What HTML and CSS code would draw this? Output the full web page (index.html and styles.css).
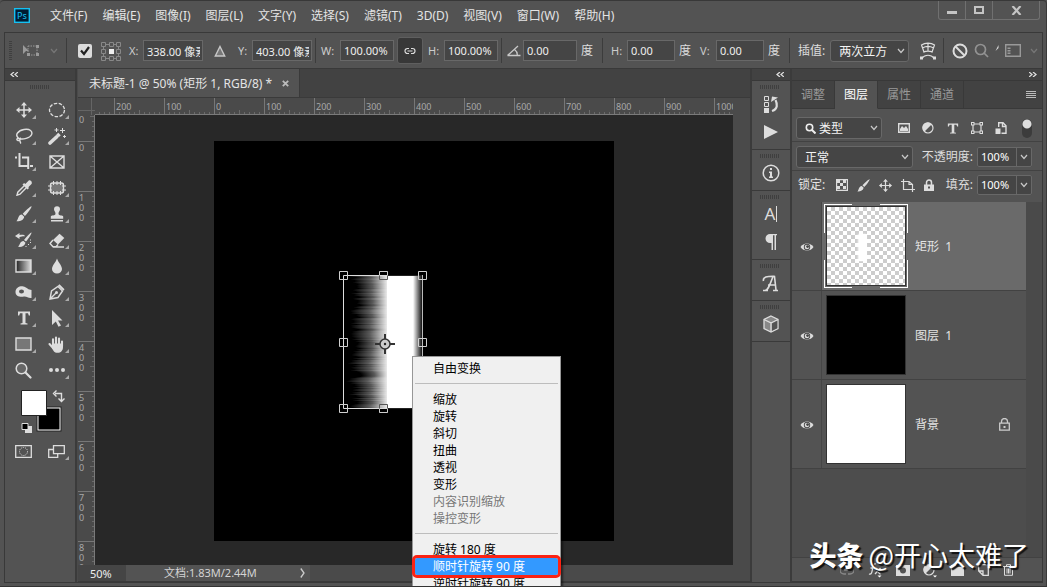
FILE: index.html
```html
<!DOCTYPE html>
<html lang="zh-CN">
<head>
<meta charset="utf-8">
<title>未标题-1</title>
<link rel="stylesheet" href="styles.css">
</head>
<body>
<svg class="defs" aria-hidden="true">
  <symbol id="chev" viewBox="0 0 8 6"><path d="M1 1l3 3.5L7 1" fill="none" stroke="currentColor" stroke-width="1.2"/></symbol>
  <symbol id="eye" viewBox="0 0 14 10"><path d="M.5 5C3 .2 11 .2 13.500 5 11 9.800 3 9.800.5 5z" fill="#ddd"/><circle cx="7" cy="5" r="3.200" fill="#4a4a4a"/><circle cx="7" cy="5" r="2.300" fill="#ddd"/><circle cx="7.600" cy="4.600" r="1.400" fill="#444"/></symbol>
  <symbol id="move" viewBox="0 0 16 16"><path d="M8 1v14M1 8h14" stroke="#ddd" stroke-width="1.500"/><path d="M8 0l3 3.500H5zM8 16l3-3.500H5zM0 8l3.500-3v6zM16 8l-3.500-3v6z" fill="#ddd"/></symbol>
  <symbol id="brush" viewBox="0 0 16 16"><path d="M15.500.3c.6.6-4 7.200-6.600 9.600L6.700 7.800C9.200 5 14.900-.3 15.500.3zM5.900 8.500l2.300 2.300C7.600 14.500 3.600 15.600.4 15.300 2.500 13.600 2 8.600 5.900 8.500z" fill="#ddd"/></symbol>
  <symbol id="tee" viewBox="0 0 14 14"><path d="M1 .5h12V4.500h-1.200L11 2.300H8.500V12l2 .5v1h-7v-1l2-.5V2.300H3L2.200 4.500H1z" fill="#ddd"/></symbol>
</svg>
<div class="app">
  <header class="menubar">
    <svg class="logo" viewBox="0 0 16 15" role="img" aria-label="Photoshop"><rect x=".7" y=".7" width="14.600" height="13.600" fill="#001d33" stroke="#16c1f3" stroke-width="1.400"/><text x="3" y="11" class="logo-text">Ps</text></svg>
    <nav class="menus">
      <button>文件(F)</button><button>编辑(E)</button><button>图像(I)</button><button>图层(L)</button><button>文字(Y)</button><button>选择(S)</button><button>滤镜(T)</button><button>3D(D)</button><button>视图(V)</button><button>窗口(W)</button><button>帮助(H)</button>
    </nav>
    <div class="winctl">
      <button aria-label="最小化"><svg width="10" height="10"><path d="M0 6h10v3H0z" fill="#c4c4c4"/></svg></button>
      <button aria-label="最大化"><svg width="10" height="8"><path d="M1 1h8v6H1z" fill="none" stroke="#c4c4c4" stroke-width="2"/></svg></button>
      <button class="wide" aria-label="关闭"><svg width="11" height="9"><path d="M1.500 0l8 9M9.500 0l-8 9" stroke="#c4c4c4" stroke-width="2.200"/></svg></button>
    </div>
  </header>

  <section class="options">
    <div class="og og-tool">
      <span class="vgrip"></span>
      <svg width="18" height="13"><path d="M1 1l6 6H4l-3 3z" fill="#999"/><path d="M6 2h9v9H6z" fill="none" stroke="#999" stroke-dasharray="1.500 1"/><path d="M14 1h3v3h-3zM14 9h3v3h-3zM5 9h3v3H5z" fill="#999"/></svg>
      <svg class="dim" width="8" height="6"><use href="#chev"/></svg>
    </div>
    <div class="og og-pos">
      <label class="check"><input type="checkbox" checked aria-label="切换参考点"><svg viewBox="0 0 14 14"><path d="M3 6.500L6 10l5-7" fill="none" stroke="#222" stroke-width="2.200"/></svg></label>
      <svg width="20" height="20"><g fill="none" stroke="#888"><path d="M.5 1.500h4v4h-4zM8.500 1.500h4v4h-4zM15.500 1.500h4v4h-4zM.5 8.500h4v4h-4zM15.500 8.500h4v4h-4zM.5 15.500h4v4h-4zM8.500 15.500h4v4h-4zM15.500 15.500h4v4h-4zM4.500 3.500h4M12.500 3.500h3M4.500 17.500h4M12.500 17.500h3M2.500 5.500v3M2.500 12.500v3M17.500 5.500v3M17.500 12.500v3"/></g><path d="M8 8h5v5H8z" fill="#eee"/></svg>
      <label class="fld"><span>X:</span><input class="w60" value="338.00 像素"></label>
      <svg class="tri" width="12" height="12"><path d="M6 1.500l4.700 9.500H1.300z" fill="#777" stroke="#c8c8c8" stroke-width="1.400"/></svg>
      <label class="fld"><span>Y:</span><input class="w60" value="403.00 像素"></label>
    </div>
    <div class="og og-size">
      <label class="fld"><span class="w19">W:</span><input class="w54" value="100.00%"></label>
      <button class="link" aria-label="保持长宽比"><svg width="12" height="8"><path d="M5 1.500H3.500a2.500 2.500 0 0 0 0 5H5M7 1.500h1.500a2.500 2.500 0 0 1 0 5H7M3.500 4h5" fill="none" stroke="#ddd" stroke-width="1.200"/></svg></button>
      <label class="fld"><span class="w16">H:</span><input class="w54" value="100.00%"></label>
    </div>
    <div class="og og-rot">
      <label class="fld"><svg width="16" height="12"><path d="M.5 10.500h13M.5 10.500L11 1M7.500 4.500c2 1.500 3 4 2.700 6" fill="none" stroke="#c8c8c8" stroke-width="1.300"/></svg><input class="w54" aria-label="旋转" value="0.00"></label>
      <span class="deg">度</span>
    </div>
    <div class="og og-skew">
      <label class="fld"><span class="w16">H:</span><input class="w48" value="0.00"></label><span class="deg">度</span>
      <label class="fld v"><span class="w16">V:</span><input class="w48" value="0.00"></label><span class="deg">度</span>
    </div>
    <div class="og og-interp">
      <label for="interp">插值:</label>
      <div class="sel"><select id="interp"><option>两次立方</option></select><svg width="8" height="6"><use href="#chev"/></svg></div>
      <button class="ib warp" aria-label="变形"><svg width="16" height="18"><path d="M1.500 3C5 .5 11 .5 14.500 3L12 10c-2-1.200-6-1.200-8 0zM8 1v8.500M2.500 6c3.500-2 7.500-2 11 0M2 16c3-3.700 9-3.700 12 0" fill="none" stroke="#ddd" stroke-width="1.200"/><path d="M0 14.500h3v3H0zM13 14.500h3v3h-3z" fill="#ddd"/></svg></button>
    </div>
    <div class="og og-end">
      <button class="ib" aria-label="取消变换"><svg width="16" height="16"><circle cx="8" cy="8" r="6.500" fill="none" stroke="#ddd" stroke-width="2"/><path d="M3.500 3.500l9 9" stroke="#ddd" stroke-width="2"/></svg></button>
      <button class="ib" aria-label="搜索"><svg width="15" height="15"><circle cx="6.500" cy="6.500" r="5" fill="none" stroke="#929292" stroke-width="1.700"/><path d="M10 10l4 4" stroke="#929292" stroke-width="1.700"/></svg></button>
      <svg class="slash" width="4" height="8"><path d="M3.500 0v3L.5 6z" fill="#ddd"/></svg>
      <button class="ib" aria-label="工作区"><svg width="16" height="13"><path d="M.7.7h14.600v11.600H.7z" fill="none" stroke="#999" stroke-width="1.400"/><path d="M2.500 3.500h3v1.500h-3zM2.500 6h3v1.500h-3zM2.500 8.500h3V10h-3z" fill="#999"/></svg></button>
      <svg class="dim" width="8" height="6"><use href="#chev"/></svg>
    </div>
  </section>

  <main class="work">
    <aside class="tools">
      <div class="cap"><svg width="8" height="5"><path d="M4 0L1 2.500 4 5M8 0L5 2.500 8 5" fill="none" stroke="#ddd" stroke-width="1.300"/></svg></div>
      <span class="grip"></span>
      <div class="toolgrid">
        <button class="t" aria-label="移动"><svg width="16" height="16"><use href="#move"/></svg></button>
        <button class="t" aria-label="椭圆选框"><svg width="18" height="16"><ellipse cx="9" cy="8" rx="7.500" ry="6.700" fill="none" stroke="#ddd" stroke-width="1.300" stroke-dasharray="3.500 1.500"/></svg></button>
        <button class="t" aria-label="套索"><svg width="18" height="16"><path d="M3.500 10C-.5 7 3 2.500 9 1.500s9 2 7.500 5.200S8 12 4 10.500c-2-.7-3 1.500-1 2s3-2 2-2.500M4.500 12c1 1.500.5 2.500 1.500 3.500" fill="none" stroke="#ddd" stroke-width="1.400"/></svg></button>
        <button class="t" aria-label="魔棒"><svg width="18" height="17"><path d="M2 15l6.500-6" stroke="#ddd" stroke-width="3.600" stroke-linecap="round"/><path d="M9.500 8l2-2" stroke="#ddd" stroke-width="3.600"/><path d="M8.500 0v4M6.500 2h4M14.500 0v5M12 2.500h5M16.500 7v3M15 8.500h3" stroke="#ddd"/></svg></button>
        <button class="t" aria-label="裁剪"><svg width="18" height="18"><path d="M0 4.500h2M4.500 0v13h9M7 4.500h6.200V16M15 13h3" fill="none" stroke="#ddd" stroke-width="2"/></svg></button>
        <button class="t plain" aria-label="图框"><svg width="16" height="14"><path d="M1 1h14v12H1zM1 1l14 12M15 1L1 13" fill="none" stroke="#ddd" stroke-width="1.400"/></svg></button>
        <button class="t" aria-label="吸管"><svg width="16" height="16"><path d="M9 5l2 2-7 7.200-3 1 .8-3z" fill="none" stroke="#ddd" stroke-width="1.400"/><path d="M6.500 4.500l5 5 1.500-1.500-.7-.8L15.500 4c1.300-1.800-1.200-4.600-3-3.300L9.300 4l-1.200-1z" fill="#ddd"/></svg></button>
        <button class="t" aria-label="修补"><svg width="18" height="16"><rect x="2.500" y="3" width="13" height="10" rx="2" fill="#777" stroke="#ddd" stroke-width="1.400"/><path d="M5.500 1v4M9 1v4M12.500 1v4M5.500 11v4M9 11v4M12.500 11v4M0 6h4M0 10h4M14 6h4M14 10h4" stroke="#ddd"/></svg></button>
        <button class="t" aria-label="画笔"><svg width="16" height="16"><use href="#brush"/></svg></button>
        <button class="t" aria-label="仿制图章"><svg width="14" height="16"><path d="M1 14.700h12" stroke="#ddd" stroke-width="1.400"/><path d="M.8 12.800V10.500C1 9 5.300 10 5.500 8 5.700 6 4 5 4 3.300a3 3 0 0 1 6 0C10 5 8.300 6 8.500 8c.2 2 4.500 1 4.700 2.500v2.300z" fill="#ddd"/></svg></button>
        <button class="t" aria-label="历史记录画笔"><svg width="18" height="16"><path d="M0 4L4.500 1v2c3-.5 5-.3 5.500 1.300C8 4 7 4.500 4.500 5v2z" fill="#ddd"/><path d="M16.500.5c.5.500-3 6.500-5.500 9L9 8c2-3 7-8 7.500-7.500zM8.500 9l2 1.800c-1 3.700-4.500 4.500-7.500 4C5 13 5 9 8.500 9z" fill="#ddd"/><path d="M15.500 7.500v1M15.500 10v1M14 12.500h-1M11.500 14.500h-1" stroke="#ddd"/></svg></button>
        <button class="t" aria-label="橡皮擦"><svg width="16" height="15"><path d="M10.500.7L15.300 5 9 11.500 4 7z" fill="#ddd"/><path d="M4 7l-3 3.500L4 13.700h3L9 11.500M4 14h11" fill="none" stroke="#ddd" stroke-width="1.400"/></svg></button>
        <button class="t" aria-label="渐变"><svg width="17" height="14"><defs><linearGradient id="g1"><stop offset="0" stop-color="#222"/><stop offset="1" stop-color="#ddd"/></linearGradient></defs><path d="M1 1h15v12H1z" fill="url(#g1)" stroke="#ddd" stroke-width="1.400"/></svg></button>
        <button class="t" aria-label="模糊"><svg width="12" height="16"><path d="M6 .5C7 4 11 7.500 11 11A5 4.600 0 0 1 1 11C1 7.500 5 4 6 .5z" fill="#ddd"/></svg></button>
        <button class="t" aria-label="减淡"><svg width="17" height="14"><path fill-rule="evenodd" d="M.5 7C.5 3 4 1 7.500 1.200c3 .2 4 1.800 6 3L16.500 5v8C12.500 13.300 12 11 8 11.700 4 12 .5 11 .5 7zM4 6.500a2.500 2 0 1 0 5 0 2.500 2 0 1 0-5 0z" fill="#ddd"/></svg></button>
        <button class="t" aria-label="钢笔"><svg width="16" height="16"><path d="M1 15l1.500-8L9 2.500 13.500 7 9 13.500zM1 15l6-6" fill="none" stroke="#ddd" stroke-width="1.400"/><circle cx="7.500" cy="8.500" r="1.500" fill="#ddd"/><path d="M9 1.500l1.500-1.200 5 5-1.200 1.500z" fill="#ddd"/></svg></button>
        <button class="t" aria-label="文字"><svg width="14" height="14"><use href="#tee"/></svg></button>
        <button class="t" aria-label="路径选择"><svg width="12" height="17"><path d="M1 0l10.500 10.500H7l3 5-2.500 1.200-2.700-5.200L1 15z" fill="#ddd"/></svg></button>
        <button class="t" aria-label="矩形"><svg width="17" height="14"><path d="M1 1h15v12H1z" fill="#777" stroke="#ddd" stroke-width="1.400"/></svg></button>
        <button class="t" aria-label="抓手"><svg width="17" height="17"><path d="M5 8V3.200M8 7.500V1.500M11 8V2.500M14 10V5.500M1.500 8l4 4.500" stroke="#ddd" stroke-width="2.100" stroke-linecap="round"/><path d="M4 7.500h11V11c0 3.500-2 5.800-5.500 5.800S5.500 15 4 12z" fill="#ddd"/></svg></button>
        <button class="t plain" aria-label="缩放"><svg width="17" height="17"><circle cx="6.500" cy="6.500" r="5.300" fill="#666" stroke="#ddd" stroke-width="1.500"/><path d="M10.500 10.500l5 5" stroke="#ddd" stroke-width="2.200" stroke-linecap="round"/></svg></button>
        <button class="t" aria-label="更多"><svg width="16" height="4"><circle cx="2" cy="2" r="2" fill="#ddd"/><circle cx="8" cy="2" r="2" fill="#ddd"/><circle cx="14" cy="2" r="2" fill="#ddd"/></svg></button>
      </div>
      <svg class="swatches" width="44" height="44" viewBox="0 0 44 44">
        <path d="M15.500 16.500h25v25h-25z" fill="#222"/><path d="M16.500 17.500h23v23h-23z" fill="#fff"/><path d="M17.500 18.500h21v21h-21z"/>
        <path d="M.5.500h25v25H.5z" fill="#fff" stroke="#222"/>
        <path d="M34 3.500h6.500V11M35.500.500l-3 3 3 3M37.500 8.500l3 3 3-3" fill="none" stroke="#ddd" stroke-width="1.400"/>
        <path d="M4 36h7v7H4z" fill="#ddd"/><path d="M1 33.500h6v6H1z" stroke="#ddd"/>
      </svg>
      <div class="modes">
        <button class="t plain" aria-label="快速蒙版"><svg width="17" height="13"><path d="M.7.7h15.600v11.600H.7z" fill="none" stroke="#ddd" stroke-width="1.300"/><circle cx="8.500" cy="6.500" r="4" fill="none" stroke="#ddd" stroke-dasharray="1 1"/></svg></button>
        <button class="t" aria-label="屏幕模式"><svg width="17" height="13"><path d="M.7 4.500h9v7.800h-9z" fill="none" stroke="#ddd" stroke-width="1.300"/><path d="M5.500.7h10.800v8H5.500z" fill="#535353" stroke="#ddd" stroke-width="1.300"/></svg></button>
      </div>
    </aside>

    <section class="doc">
      <div class="tabs"><div class="tab"><span>未标题-1 @ 50% (矩形 1, RGB/8) *</span><button aria-label="关闭文档"><svg width="7" height="7"><path d="M.8.8l5.400 5.400M6.200.8L.8 6.200" stroke="#bbb" stroke-width="1.800"/></svg></button></div></div>
      <div class="view">
        <div class="corner"></div>
        <div class="hruler"><span>200</span><span>100</span><span>0</span><span>100</span><span>200</span><span>300</span><span>400</span><span>500</span><span>600</span><span>700</span><span>800</span><span>900</span><span>1000</span></div>
        <div class="vscroll"></div>
        <div class="vruler"><span class="part">0</span><span>0</span><span>1<br>0<br>0</span><span>2<br>0<br>0</span><span>3<br>0<br>0</span><span>4<br>0<br>0</span><span>5<br>0<br>0</span><span>6<br>0<br>0</span><span>7<br>0<br>0</span><span>8<br>0<br>0</span></div>
        <div class="stage">
          <div class="artboard">
            <svg class="xform" width="90" height="144" viewBox="-5 -5 90 144">
              <defs>
                <linearGradient id="streak"><stop offset="0" stop-color="#fff" stop-opacity="0"/><stop offset=".5" stop-color="#fff" stop-opacity=".35"/><stop offset="1" stop-color="#fff" stop-opacity=".95"/></linearGradient>
                <linearGradient id="fade"><stop offset="0" stop-color="#fff"/><stop offset="1" stop-color="#111"/></linearGradient>
              </defs>
              <g id="streaks"></g>
              <path d="M44 0h27v134H44z" fill="#fff"/><path d="M70 0h9v134h-9z" fill="url(#fade)"/>
              <path d="M44 .5H.5v133H44" fill="none" stroke="#ddd"/><path d="M44 .5h35M44 133.500h35" stroke="#222"/><path d="M79.500 0v134" stroke="#bbb"/>
              <g fill="none" stroke="#d0d0d0"><path d="M-3.500-3.500h8v8h-8zM75.500-3.500h8v8h-8zM-3.500 129.500h8v8h-8zM-3.500 63.500h8v8h-8zM75.500 63.500h8v8h-8z"/></g>
              <path d="M36.500-3.500h8v8h-8zM36.500 129.500h8v8h-8z" fill="none" stroke="#555"/>
              <path d="M36.500.5v-4h8v4M36.500 133.500v4h8v-4" fill="none" stroke="#ccc"/>
              <circle cx="42" cy="69" r="5" fill="#ccc" stroke="#333" stroke-width="1.500"/><path d="M42 59v5M42 74v5M32 69h5M47 69h5" stroke="#333" stroke-width="2"/><circle cx="42" cy="69" r="1.200" fill="#222"/>
            </svg>
          </div>
        </div>
      </div>
      <footer class="status"><span class="pct">50%</span><span class="info"><span>文档:1.83M/2.44M</span><svg width="5" height="10"><path d="M.8.5L4 5 .8 9.500" fill="none" stroke="#ccc" stroke-width="1.300"/></svg></span></footer>
    </section>

    <aside class="dock">
      <div class="cap end"><svg width="8" height="5"><path d="M4 0L1 2.500 4 5M8 0L5 2.500 8 5" fill="none" stroke="#ddd" stroke-width="1.300"/></svg></div>
      <div class="dg"><span class="grip"></span>
        <button class="db" aria-label="历史记录"><svg width="16" height="18"><path d="M1.500 1.500h4v4h-4zM1.500 7.500h4v4h-4z" fill="none" stroke="#ddd"/><path d="M1 13h5v5H1z" fill="#ddd"/><path d="M9 16c6-2 5.500-7 3.500-11" fill="none" stroke="#ddd" stroke-width="2.200"/><path d="M8 7l1-5.500 6 1z" fill="#ddd"/></svg></button>
        <button class="db" aria-label="动作"><svg width="14" height="14"><path d="M0 0l14 7-14 7z" fill="#ddd"/></svg></button></div>
      <div class="dg"><span class="grip"></span>
        <button class="db" aria-label="信息"><svg width="18" height="18"><circle cx="9" cy="9" r="7.800" fill="none" stroke="#ddd" stroke-width="1.500"/><path d="M8 4h2v2H8zM7 7.500h3v5h1V14H7v-1.500h1V9H7z" fill="#ddd"/></svg></button></div>
      <div class="dg"><span class="grip"></span>
        <button class="db" aria-label="字符"><span class="ga">A</span><i class="bar"></i></button>
        <button class="db" aria-label="段落"><svg width="12" height="16"><path d="M6 0h6v1.300h-1V16H9.500V1.300H8V16H6.500V9H5A4.500 4.500 0 0 1 5 0z" fill="#ddd"/></svg></button></div>
      <div class="dg"><span class="grip"></span><button class="db" aria-label="字形"><svg width="18" height="17"><path d="M3 15.500c3 0 5-6 8-14h1.500L14 15M1.500 6C.5 2 5 1 12.500 1.200M6 10h7.500M1 15.500h5M11 15.500h5" fill="none" stroke="#ddd" stroke-width="1.600"/></svg></button></div>
      <div class="dg"><span class="grip"></span><button class="db" aria-label="3D"><svg width="16" height="18"><path d="M8 1l7 3.500v9L8 17l-7-3.500v-9z" fill="#888" stroke="#ddd" stroke-width="1.300"/><path d="M1 4.500L8 8v9M8 8l7-3.500" fill="none" stroke="#ddd" stroke-width="1.300"/><path d="M9 8.500l5.300-2.700v7.400L9 15.800z" fill="#535353"/></svg></button></div>
    </aside>

    <aside class="panel">
      <div class="cap end"><svg width="8" height="5"><path d="M0 0l3 2.500L0 5M4 0l3 2.500L4 5" fill="none" stroke="#ddd" stroke-width="1.300"/></svg></div>
      <div class="ptabs"><button>调整</button><button class="on">图层</button><button>属性</button><button>通道</button><button class="burger" aria-label="面板菜单"><svg width="10" height="8"><path d="M0 .5h10M0 2.500h10M0 4.500h10M0 6.500h10" stroke="#bbb"/></svg></button></div>
      <div class="prow filter">
        <div class="sel kind"><svg class="mag" width="11" height="11"><circle cx="4.500" cy="4.500" r="3.200" fill="none" stroke="#eee" stroke-width="1.600"/><path d="M7 7l3.500 3.500" stroke="#eee" stroke-width="2"/></svg><select aria-label="过滤类型"><option>类型</option></select><svg width="8" height="6"><use href="#chev"/></svg></div>
        <div class="ficons">
          <button class="ib" aria-label="像素图层"><svg width="12" height="12"><path d="M.7 1.700h10.600v8.600H.7z" fill="none" stroke="#ddd" stroke-width="1.400"/><path d="M2 9V7l2-3 2 2 2-2 2 3v2z" fill="#ddd"/></svg></button>
          <button class="ib" aria-label="调整图层"><svg width="12" height="12"><circle cx="6" cy="6" r="5" fill="none" stroke="#ddd" stroke-width="1.200"/><path d="M9.800 2.300A5.300 5.300 0 1 0 2.300 9.700z" fill="#ddd"/></svg></button>
          <button class="ib" aria-label="文字图层"><svg width="12" height="11" viewBox="0 0 14 14" preserveAspectRatio="none"><use href="#tee"/></svg></button>
          <button class="ib" aria-label="形状图层"><svg width="12" height="12"><path d="M2 2h8v8H2z" fill="none" stroke="#ddd" stroke-width="1.200"/><path d="M0 0h3.500v3.500H0zM8.500 0H12v3.500H8.500zM0 8.500h3.500V12H0zM8.500 8.500H12V12H8.500z" fill="#ddd"/><path d="M1 1h1.500v1.500H1zM9.500 1H11v1.500H9.500zM1 9.500h1.500V11H1zM9.500 9.500H11V11H9.500z" fill="#535353"/></svg></button>
          <button class="ib" aria-label="智能对象"><svg width="12" height="12"><path d="M3.700 5V.7H8l3 3v7.600H6.500M7.500 1v3.500H11" fill="none" stroke="#ddd" stroke-width="1.400"/><path d="M.5 6.500h5V12h-5z" fill="#ddd"/></svg></button>
        </div>
        <button class="toggle" aria-label="过滤开关"></button>
      </div>
      <div class="prow blend">
        <div class="sel mode"><select aria-label="混合模式"><option>正常</option></select><svg width="8" height="6"><use href="#chev"/></svg></div>
        <label for="opacity">不透明度:</label>
        <div class="pctbox"><input id="opacity" value="100%"><button aria-label="不透明度滑块"><svg width="8" height="6"><use href="#chev"/></svg></button></div>
      </div>
      <div class="prow lock">
        <span>锁定:</span>
        <div class="licons">
          <button class="ib" aria-label="锁定透明像素"><svg width="12" height="12"><path d="M.6.6h10.800v10.800H.6z" fill="none" stroke="#ddd" stroke-width="1.200"/><path d="M1 1h3v3H1zM7 1h3v3H7zM4 4h3v3H4zM1 7h3v3H1zM7 7h3v3H7z" fill="#ddd"/></svg></button>
          <button class="ib" aria-label="锁定图像像素"><svg width="13" height="13"><use href="#brush"/></svg></button>
          <button class="ib" aria-label="锁定位置"><svg width="13" height="13"><use href="#move"/></svg></button>
          <button class="ib" aria-label="防止嵌套"><svg width="14" height="13"><path d="M0 2.500h8l3.500 3v7.500M2.500 0v10.500H14M8 2.500v3h3" fill="none" stroke="#ddd" stroke-width="1.200"/></svg></button>
          <button class="ib" aria-label="锁定全部"><svg width="10" height="12"><path d="M2.500 6V3.500a2.500 2.500 0 0 1 5 0V6" fill="none" stroke="#ddd" stroke-width="1.500"/><path fill-rule="evenodd" d="M0 5.500h10V12H0zM4 7.500v2h2v-2z" fill="#ddd"/></svg></button>
        </div>
        <label for="fill">填充:</label>
        <div class="pctbox"><input id="fill" value="100%"><button aria-label="填充滑块"><svg width="8" height="6"><use href="#chev"/></svg></button></div>
      </div>
      <div class="layers">
        <ul>
          <li class="sel-row"><button class="eye" aria-label="可见"><svg width="14" height="10"><use href="#eye"/></svg></button><div class="lay"><span class="frame"><span class="thumb checker"><i></i></span></span><span class="name">矩形&nbsp; 1</span></div></li>
          <li><button class="eye" aria-label="可见"><svg width="14" height="10"><use href="#eye"/></svg></button><div class="lay"><span class="frame"><span class="thumb black"></span></span><span class="name">图层&nbsp; 1</span></div></li>
          <li><button class="eye" aria-label="可见"><svg width="14" height="10"><use href="#eye"/></svg></button><div class="lay"><span class="frame"><span class="thumb white"></span></span><span class="name">背景</span><svg class="padlock" width="11" height="13"><path d="M.7 5.200h9.600v7H.7zM2.500 5V3.500a3 3 0 0 1 6 0V5" fill="none" stroke="#ccc" stroke-width="1.300"/><path d="M4.500 8h2v2h-2z" fill="#ccc"/></svg></div></li>
        </ul>
      </div>
      <div class="pfoot">
        <button class="ib" aria-label="链接图层"><svg width="14" height="12"><path d="M6 2H4a4 4 0 0 0 0 8h2M8 2h2a4 4 0 0 1 0 8H8M4 6h6" fill="none" stroke="#888" stroke-width="1.400"/></svg></button>
        <button class="ib" aria-label="图层样式"><svg width="14" height="16"><path d="M8 2C5 1 5 4 4.500 7S3.500 13 1 12M2.500 6h4M7.500 6c2 0 2.500 6 5 6M12.500 6L7 12" fill="none" stroke="#ddd" stroke-width="1.300"/><path d="M9.500 13.500h4l-2 2z" fill="#fff"/></svg></button>
        <button class="ib" aria-label="图层蒙版"><svg width="14" height="12"><path fill-rule="evenodd" d="M0 1h14v11H0zM4 6.500a3 3 0 1 0 6 0 3 3 0 1 0-6 0z" fill="#ddd"/></svg></button>
        <button class="ib" aria-label="调整图层"><svg width="14" height="16"><circle cx="6" cy="8" r="5" fill="none" stroke="#ddd" stroke-width="1.200"/><path d="M9.800 4.300A5.300 5.300 0 1 0 2.300 11.700z" fill="#ddd"/><path d="M10 13.500h4l-2 2z" fill="#fff"/></svg></button>
        <button class="ib" aria-label="新建组"><svg width="13" height="12"><path d="M0 1h5l1 2h7v9H0z" fill="#ddd"/></svg></button>
        <button class="ib" aria-label="新建图层"><svg width="11" height="12"><path d="M.7.7h9.600v10.600H5L.7 7zM.7 7H5v4" fill="none" stroke="#ddd" stroke-width="1.300"/></svg></button>
        <button class="ib" aria-label="删除图层"><svg width="11" height="12"><path d="M0 2.500h11M3.500 2V.7h4V2M1.500 3v8.300h8V3M4 4.500v5M5.500 4.500v5M7 4.500v5" fill="none" stroke="#ddd"/></svg></button>
      </div>
    </aside>
  </main>

  <div class="ctx" role="menu">
    <button role="menuitem">自由变换</button><hr>
    <button role="menuitem">缩放</button><button role="menuitem">旋转</button><button role="menuitem">斜切</button><button role="menuitem">扭曲</button><button role="menuitem">透视</button><button role="menuitem">变形</button><button role="menuitem" disabled>内容识别缩放</button><button role="menuitem" disabled>操控变形</button><hr>
    <button role="menuitem">旋转 180 度</button><button role="menuitem" class="hot">顺时针旋转 90 度</button><button role="menuitem">逆时针旋转 90 度</button>
  </div>
  <div class="mark"><b>头条</b><span>@开心太难了</span></div>
</div>
<script src="streaks.js"></script>
</body>
</html>
```

FILE: styles.css
```css
* { box-sizing: border-box; }
body { margin: 0; background: #535353; color: #e4e4e4; font: 12px/16px "Noto Sans", "Noto Sans CJK SC", sans-serif; }
button, input, select { font: inherit; color: inherit; margin: 0; padding: 0; border: 0; background: none; border-radius: 0; }
svg { display: block; flex: none; }
.defs { position: absolute; width: 0; height: 0; }
.app { position: relative; height: 100vh; overflow: hidden; display: flex; flex-direction: column; padding: 0 3px 3px 4px; background: #535353; border-top: 1px solid #383838; border-bottom: 1px solid #333; border-right: 1px solid #3a3a3a; border-radius: 4px 4px 0 0; }
.ib { display: grid; place-items: center; }

.menubar { display: flex; align-items: center; height: 31px; flex: none; padding-left: 10px; }
.logo { width: 16px; height: 15px; margin-bottom: 2px; }
.logo-text { font: 9px "Noto Sans", sans-serif; fill: #16c1f3; }
.menus { display: flex; gap: 15px; padding: 0 0 1px 20px; flex: 1; }
.menus button { white-space: nowrap; }
.winctl { display: flex; align-self: flex-start; border: 1px solid #707070; border-top: 0; border-radius: 0 0 3px 3px; height: 19px; margin-right: 3px; }
.winctl button { display: grid; place-items: center; width: 27px; border-right: 1px solid #707070; }
.winctl .wide { width: 46px; border: 0; }

.options { display: flex; height: 37px; flex: none; align-items: center; border: 1px solid #393939; font-size: 11px; }
.og { display: flex; align-items: center; height: 25px; border-right: 1px solid #3c3c3c; flex: none; color: #ccc; }
.og:last-child { border: 0; }
.vgrip { width: 3px; height: 19px; background: repeating-linear-gradient(#3f3f3f 0 1px, transparent 1px 2px); }
.dim { color: #777; }
.og-tool { gap: 10px; padding: 0 8px 0 4px; }
.og-pos { padding: 0 3px 0 11px; }
.check { display: grid; margin-right: 9px; }
.check > * { grid-area: 1 / 1; width: 14px; height: 14px; }
.check input { appearance: none; background: #dcdcdc; border-radius: 2px; }
.check svg { pointer-events: none; }
.fld { display: flex; align-items: center; }
.fld span { width: 14px; }
.og-pos .fld { margin-left: 8px; }
.og-pos .tri { margin: 0 4px 0 11px; }
.fld input { height: 21px; border: 1px solid #686868; background: #454545; padding: 0 2px 0 3px; color: #eee; }
.fld .w16 { width: 16px; }
.fld .w19 { width: 19px; }
.w48 { width: 48px; }
.w54 { width: 54px; }
.w60 { width: 60px; }
.og-size { padding: 0 3px 0 5px; }
.link { display: grid; place-items: center; width: 26px; height: 27px; margin: 0 5px 0 3px; background: #383838; border: 1px solid #5f5f5f; border-radius: 3px; }
.og-rot { padding: 0 9px 0 5px; }
.deg { margin-left: 4px; font-size: 12px; color: #ddd; }
.og-skew { padding: 0 9px 0 8px; }
.og-skew .v { margin-left: 9px; }
.og-interp { padding: 0 7px 0 8px; }
.og-interp label { font-size: 12px; color: #ddd; }
.og-interp .sel { width: 79px; margin: 0 11px 0 5px; }
.sel { display: grid; grid-template-columns: 1fr auto; align-items: center; height: 22px; border: 1px solid #686868; border-radius: 3px; background: #454545; padding-right: 3px; color: #c8c8c8; }
.sel select { grid-area: 1 / 1 / 2 / 3; appearance: none; width: 100%; height: 20px; padding: 2px 0 0 8px; font-size: 12px; color: #f4f4f4; outline: 0; }
.sel > svg { grid-area: 1 / 2; pointer-events: none; }
.og-end { flex: 1; gap: 6px; padding: 0 4px 0 8px; }
.og-end .slash { margin-bottom: 4px; }
.og-end .dim { margin-left: auto; }

.work { flex: 1; min-height: 0; display: flex; border: 1px solid #393939; border-top: 0; }
.cap { height: 12px; flex: none; display: flex; align-items: center; background: #424242; border-bottom: 1px solid #383838; padding: 0 5px; }
.cap.end { justify-content: flex-end; }
.grip { display: block; width: 20px; height: 4px; background: repeating-linear-gradient(90deg, #3f3f3f 0 1px, transparent 1px 2px); }
.tools { width: 72px; flex: none; border-right: 2px solid #3b3b3b; }
.tools .grip { margin: 4px 0 8px 25px; }
.toolgrid, .modes { display: grid; grid-template-columns: 33px 33px; padding-left: 2px; }
.t { position: relative; display: grid; place-items: center; height: 26px; }
.t::after { content: ""; position: absolute; right: 4px; bottom: 4px; border: 2px solid; border-color: transparent #aaa #aaa transparent; }
.t.plain::after { display: none; }
.swatches { margin: 7px 0 4px 16px; }

.doc { flex: 1; min-width: 0; display: flex; flex-direction: column; background: #4a4a4a; padding-left: 1px; border-right: 2px solid #3b3b3b; }
.tabs { height: 29px; flex: none; background: #424242; border-bottom: 1px solid #3a3a3a; display: flex; }
.tab { display: flex; align-items: center; gap: 10px; padding: 1px 10px 0 11px; background: #535353; border-right: 1px solid #3a3a3a; white-space: nowrap; }
.tab button { display: grid; }
.view { flex: 1; min-height: 0; display: grid; grid-template: 17px 1fr / 17px 1fr 17px; }
.view > * { min-width: 0; min-height: 0; overflow: hidden; }
.corner { background: linear-gradient(#777, #777) 0 12px / 17px 1px no-repeat, linear-gradient(#777, #777) 13px 0 / 1px 17px no-repeat, #4a4a4a; opacity: .6; }
.hruler, .vruler { color: #a8a8a8; font: 9px/10px "Noto Sans", sans-serif; background-color: #4a4a4a; }
.hruler { display: flex; padding-left: 19px; border-bottom: 1px solid #7a7a7a; background-image: repeating-linear-gradient(90deg, #777 0 1px, transparent 1px 50px), repeating-linear-gradient(90deg, #6a6a6a 0 1px, transparent 1px 25px), repeating-linear-gradient(90deg, #6a6a6a 0 1px, transparent 1px 5px); background-size: 750px 17px, 750px 5px, 750px 3px; background-position: -31px 0, -31px 12px, -31px 14px; background-repeat: no-repeat; }
.hruler span { flex: 0 0 50px; padding: 4px 0 0 2px; }
.vruler { display: flex; flex-direction: column; border-right: 1px solid #7a7a7a; background-image: repeating-linear-gradient(#777 0 1px, transparent 1px 50px), repeating-linear-gradient(#6a6a6a 0 1px, transparent 1px 25px), repeating-linear-gradient(#6a6a6a 0 1px, transparent 1px 5px); background-size: 17px 1500px, 5px 1500px, 3px 1500px; background-position: 0 -24px, 12px -24px, 14px -24px; background-repeat: no-repeat; }
.vruler span { flex: 0 0 50px; padding: 2px 0 0 1px; }
.vruler .part { flex-basis: 26px; padding-top: 0; }
.vscroll { grid-row: 1 / 3; grid-column: 3; background: #4a4a4a; }
.stage { position: relative; background: #282828; }
.artboard { position: absolute; left: 119px; top: 26px; width: 400px; height: 400px; background: #000; }
.xform { position: absolute; left: 124px; top: 129px; }
.status { display: flex; height: 17px; flex: none; line-height: 18px; font-size: 11px; border-bottom: 1px solid #3a3a3a; }
.pct { width: 48px; padding-left: 12px; background: #454545; color: #eee; }
.info { display: flex; align-items: center; justify-content: space-between; width: 184px; padding: 0 5px 0 38px; background: #535353; color: #d4d4d4; }

.dock { width: 40px; flex: none; border-right: 2px solid #3b3b3b; }
.dock .cap { padding-right: 6px; }
.dg { display: flex; flex-direction: column; align-items: center; border-bottom: 1px solid #3a3a3a; padding: 4px 0 3px; }
.dg .grip { margin-bottom: 1px; margin-right: 2px; }
.db { display: flex; align-items: center; justify-content: center; gap: 1px; width: 38px; height: 28px; }
.ga { font-size: 17px; line-height: 20px; color: #ddd; }
.bar { width: 1px; height: 16px; background: #ddd; }

.panel { width: 250px; flex: none; display: flex; flex-direction: column; }
.ptabs { display: flex; height: 28px; flex: none; background: #424242; }
.ptabs button { width: 43px; padding-top: 1px; border-right: 1px solid #393939; border-bottom: 1px solid #393939; color: #999; flex: none; }
.ptabs .on { background: #535353; border-bottom-color: #535353; color: #fff; }
.ptabs .burger { display: grid; place-items: center end; flex: 1; width: auto; border-right: 0; padding-right: 6px; }
.prow { display: flex; align-items: center; flex: none; padding: 0 10px 0 4px; }
.filter { height: 33px; border-bottom: 1px solid #424242; padding: 6px 10px 0 4px; }
.kind { width: 86px; }
.kind .mag { grid-area: 1 / 1; margin-left: 8px; }
.kind select { padding-left: 22px; }
.ficons { display: flex; flex: 1; justify-content: space-between; padding: 0 15px 0 16px; }
.toggle { width: 10px; height: 19px; border-radius: 5px; background: radial-gradient(circle at 5px 5px, #ddd 0 4px, transparent 5px), #3c3c3c; }
.blend { height: 29px; padding-top: 2px; border-bottom: 1px solid #424242; }
.mode { width: 117px; margin-right: 7px; }
.prow label { color: #ddd; white-space: nowrap; margin-left: auto; }
.pctbox { display: flex; height: 20px; margin-left: 4px; border: 1px solid #686868; border-radius: 2px; background: #454545; }
.pctbox input { width: 38px; padding-left: 3px; font-size: 11px; color: #fff; }
.pctbox button { display: grid; place-items: center; width: 15px; border-left: 1px solid #686868; color: #c8c8c8; }
.lock { height: 31px; padding: 0 10px 3px 6px; }
.licons { display: flex; align-items: center; gap: 9px; margin-left: 11px; }
.layers { flex: 1; min-height: 0; background: #4a4a4a; }
.layers ul { list-style: none; margin: 0 16px 0 0; padding: 0; height: 100%; background: #4d4d4d; }
.layers li { display: flex; height: 89px; background: #535353; border-bottom: 1px solid #424242; }
.eye { display: grid; place-items: center; width: 30px; padding-top: 2px; border-right: 1px solid #464646; }
.lay { display: flex; align-items: center; flex: 1; gap: 7px; padding: 0 16px 0 2px; }
.name { padding-top: 2px; }
.sel-row .lay { background: #6a6a6a; }
.frame { padding: 2px; }
.thumb { display: block; width: 80px; height: 80px; border: 1px solid #333; }
.sel-row .frame { background: linear-gradient(#6a6a6a, #6a6a6a) 28px 0 / 28px 84px no-repeat, linear-gradient(#6a6a6a, #6a6a6a) 0 29px / 84px 27px no-repeat, linear-gradient(#6a6a6a, #6a6a6a) 1px 1px / 82px 82px no-repeat, #fff; }
.checker { background: repeating-conic-gradient(#ccc 0 25%, #fff 0 50%) 0 0 / 8px 8px; padding: 27px 0 0 32px; }
.checker i { display: block; width: 8px; height: 27px; background: #fff; box-shadow: -1px 0 2px #fff; }
.black { background: #000; }
.white { background: #fff; }
.padlock { margin-left: auto; }
.pfoot { display: flex; justify-content: space-between; align-items: center; height: 25px; flex: none; padding: 0 28px 0 48px; border-top: 1px solid #424242; border-bottom: 1px solid #393939; }

.ctx { position: absolute; left: 412px; top: 355px; width: 149px; padding: 3px 2px; background: #f0f0f0; border: 1px solid #979797; box-shadow: 2px 2px 2px rgba(0, 0, 0, .5); color: #000; }
.ctx button { display: block; width: 100%; height: 17px; line-height: 17px; padding-left: 18px; text-align: left; white-space: nowrap; }
.ctx button:disabled { color: #777; }
.ctx hr { height: 1px; margin: 6px 0 7px; border: 0; background: #bdbdbd; }
.ctx .hot { background: #3399ff; color: #fff; outline: 3px solid #fb2314; outline-offset: 0; border-radius: 2px; position: relative; }
.mark { position: absolute; right: 17px; bottom: 13px; display: flex; gap: 5px; align-items: center; font: 27px/36px "Noto Sans CJK SC", sans-serif; color: #fff; text-shadow: 2px 2px 1px #111; white-space: nowrap; }
.mark b { font-weight: 900; }
```

FILE: streaks.js
```js
const group = document.getElementById('streaks');
let seed = 7, level = 0.5;
const next = () => (seed = (seed * 16807) % 2147483647) / 2147483647;
for (let y = 1; y < 133; y++) {
  level = level * 0.5 + next() * 0.5;
  const x = 1 + level * 20;
  const r = document.createElementNS('http://www.w3.org/2000/svg', 'rect');
  r.setAttribute('x', x);
  r.setAttribute('y', y);
  r.setAttribute('width', 45 - x);
  r.setAttribute('height', 1);
  r.setAttribute('fill', 'url(#streak)');
  group.append(r);
}
```
